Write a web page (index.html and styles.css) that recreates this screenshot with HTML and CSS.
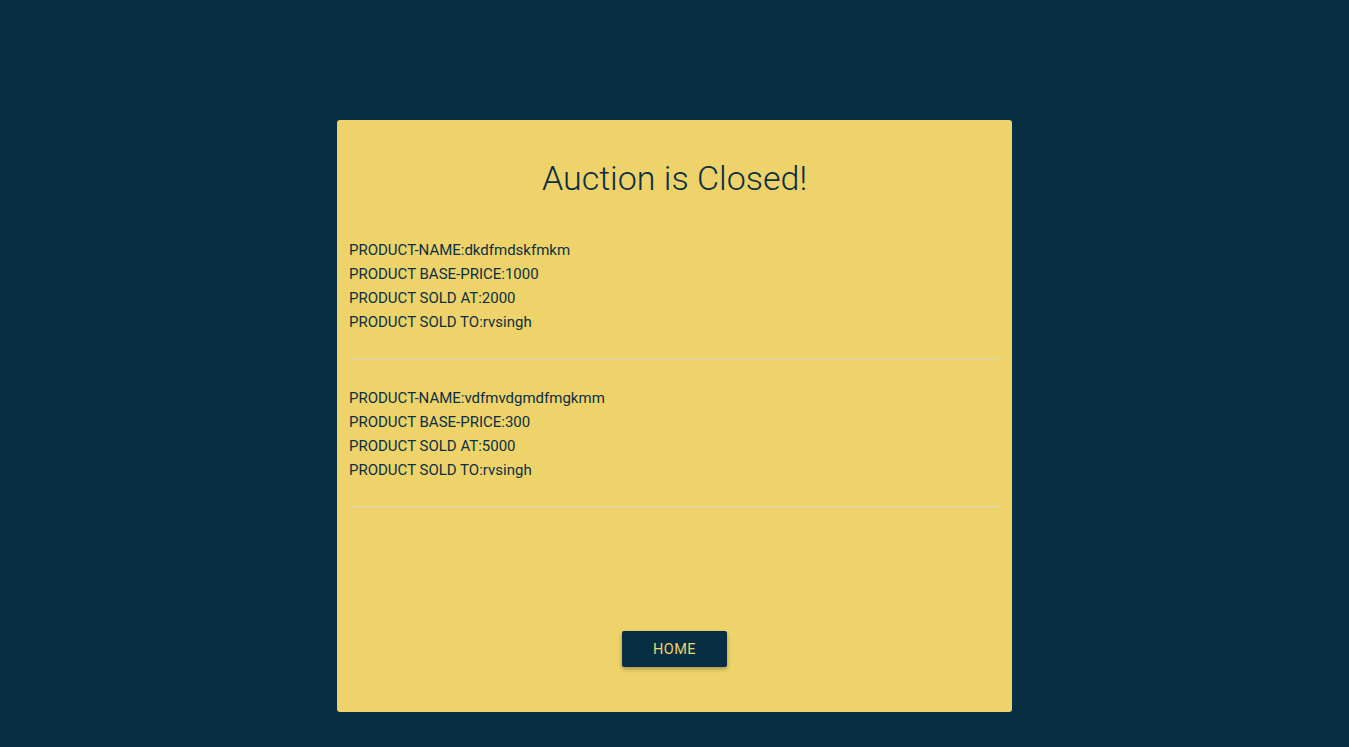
FILE: index.html
```html
<!DOCTYPE html>
<html>
<head>
<meta charset="utf-8">
<link rel="stylesheet" href="styles.css">
</head>
<body>
<main class="page">
  <section class="card">
    <h1 class="title">Auction is Closed!</h1>
    <div class="item">
      <div class="line">PRODUCT-NAME:dkdfmdskfmkm</div>
      <div class="line">PRODUCT BASE-PRICE:1000</div>
      <div class="line">PRODUCT SOLD AT:2000</div>
      <div class="line">PRODUCT SOLD TO:rvsingh</div>
    </div>
    <hr class="sep">
    <div class="item">
      <div class="line">PRODUCT-NAME:vdfmvdgmdfmgkmm</div>
      <div class="line">PRODUCT BASE-PRICE:300</div>
      <div class="line">PRODUCT SOLD AT:5000</div>
      <div class="line">PRODUCT SOLD TO:rvsingh</div>
    </div>
    <hr class="sep">
    <div class="actions">
      <button class="btn">HOME</button>
    </div>
  </section>
</main>
</body>
</html>
```
FILE: styles.css
```css
html, body {
  margin: 0;
  padding: 0;
  background: #082e44;
  font-family: Roboto, "Liberation Sans", sans-serif;
}
.page {
  display: flex;
  justify-content: center;
  padding-top: 120px;
  height: 747px;
  box-sizing: border-box;
}
.card {
  width: 675px;
  height: 592px;
  box-sizing: border-box;
  background: #edd36a;
  border-radius: 3px;
  padding: 0 12px;
  display: flex;
  flex-direction: column;
  color: #0c2f44;
}
.title {
  margin: 37px 0 0;
  font-weight: 300;
  font-size: 34px;
  line-height: 43px;
  text-align: center;
  color: #0c2f44;
}
.item {
  margin-top: 38px;
}
.item + .sep + .item {
  margin-top: 27px;
}
.line {
  font-size: 15px;
  line-height: 24px;
}
.sep {
  border: 0;
  height: 1px;
  background: #dcd6c3;
  margin: 24px 0 0;
}
.actions {
  display: flex;
  justify-content: center;
  margin-top: 124px;
}
.btn {
  width: 105px;
  height: 36px;
  border: 0;
  border-radius: 2px;
  background: #082e44;
  color: #edd36a;
  font-family: Roboto, "Liberation Sans", sans-serif;
  font-size: 14.5px;
  letter-spacing: 0.5px;
  box-shadow: 0 2px 4px rgba(0,0,0,0.3);
}
```
